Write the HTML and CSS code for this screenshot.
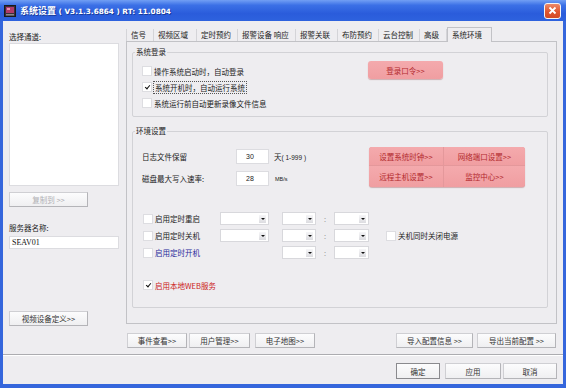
FILE: index.html
```html
<!DOCTYPE html>
<html lang="zh-CN">
<head>
    <meta charset="UTF-8">
    <title>系统设置</title>
    <link rel="stylesheet" href="styles.css">
</head>
<body>
<div class="window">
    <div class="titlebar">
        <svg class="app-icon" width="12" height="12" viewBox="0 0 12 12">
            <rect x="0.5" y="0.5" width="11" height="11" fill="#3a2c3c" stroke="#1a1a1a"/>
            <rect x="2" y="2" width="8" height="6" fill="#b03a6a"/>
            <rect x="3" y="3" width="3" height="2" fill="#e890b0"/>
            <rect x="2" y="9" width="8" height="1.5" fill="#8a8a8a"/>
        </svg>
        <span class="title"><span class="title-cn">系统设置</span> ( V3.1.3.6864 ) RT: 11.0804</span>
        <span class="close">
            <svg width="9" height="9" viewBox="0 0 9 9"><path d="M1.5 1.5 L7.5 7.5 M7.5 1.5 L1.5 7.5" stroke="#fff" stroke-width="1.8"/></svg>
        </span>
    </div>

    <div class="client">
        <div class="main">
            <div class="left">
                <div class="label first">选择通道:</div>
                <div class="listbox"></div>
                <button class="btn copy" disabled>复制到 &gt;&gt;</button>
                <div class="label server">服务器名称:</div>
                <div class="textbox">SEAV01</div>
                <button class="btn video">视频设备定义&gt;&gt;</button>
            </div>

            <div class="right">
                <div class="tabs">
                    <span class="tab t28 first-tab">信号</span>
                    <span class="tab t43">视频区域</span>
                    <span class="tab t41">定时预约</span>
                    <span class="tab t58">报警设备 响应</span>
                    <span class="tab t42">报警关联</span>
                    <span class="tab t41">布防预约</span>
                    <span class="tab t41">云台控制</span>
                    <span class="tab t27">高级</span>
                    <span class="tab t45 active">系统环境</span>
                </div>

                <div class="panel">
                    <div class="group login-group">
                        <span class="legend">系统登录</span>
                        <div class="login-body">
                            <div class="check-list">
                                <label class="check"><span class="box"></span><span>操作系统启动时，自动登录</span></label>
                                <label class="check"><span class="box on"></span><span class="focus">系统开机时，自动运行系统</span></label>
                                <label class="check"><span class="box"></span><span>系统运行前自动更新录像文件信息</span></label>
                            </div>
                            <button class="btn pink login-btn">登录口令&gt;&gt;</button>
                        </div>
                    </div>

                    <div class="group env-group">
                        <span class="legend">环境设置</span>
                        <div class="env-top">
                            <div class="form">
                                <div class="form-row">
                                    <span class="form-label">日志文件保留</span>
                                    <span class="num">30</span>
                                    <span class="unit">天<span class="latin">( 1-999 )</span></span>
                                </div>
                                <div class="form-row">
                                    <span class="form-label">磁盘最大写入速率:</span>
                                    <span class="num">28</span>
                                    <span class="unit small">MB/s</span>
                                </div>
                            </div>
                            <div class="pink-grid">
                                <button class="pink-cell">设置系统时钟&gt;&gt;</button>
                                <button class="pink-cell">网络端口设置&gt;&gt;</button>
                                <button class="pink-cell">远程主机设置&gt;&gt;</button>
                                <button class="pink-cell">监控中心&gt;&gt;</button>
                            </div>
                        </div>

                        <div class="schedule">
                            <div class="sched-row">
                                <label class="check sched-check"><span class="box"></span><span>启用定时重启</span></label>
                                <span class="select s49"><i></i></span>
                                <span class="select s34"><i></i></span>
                                <span class="colon">:</span>
                                <span class="select s35"><i></i></span>
                            </div>
                            <div class="sched-row">
                                <label class="check sched-check"><span class="box"></span><span>启用定时关机</span></label>
                                <span class="select s49"><i></i></span>
                                <span class="select s34"><i></i></span>
                                <span class="colon">:</span>
                                <span class="select s35"><i></i></span>
                                <label class="check power"><span class="box"></span><span>关机同时关闭电源</span></label>
                            </div>
                            <div class="sched-row">
                                <label class="check sched-check blue"><span class="box"></span><span>启用定时开机</span></label>
                                <span class="select-gap"></span>
                                <span class="select s34"><i></i></span>
                                <span class="colon">:</span>
                                <span class="select s35"><i></i></span>
                            </div>
                        </div>

                        <label class="check web red"><span class="box on"></span><span>启用本地WEB服务</span></label>
                    </div>
                </div>

                <div class="tool-row">
                    <button class="btn b60 m1">事件查看&gt;&gt;</button>
                    <button class="btn b61 m2">用户管理&gt;&gt;</button>
                    <button class="btn b60 m5">电子地图&gt;&gt;</button>
                    <button class="btn b77 push">导入配置信息 &gt;&gt;</button>
                    <button class="btn b79 m4">导出当前配置 &gt;&gt;</button>
                </div>
            </div>
        </div>

        <div class="sep"></div>

        <div class="ok-row">
            <button class="btn default ok">确定</button>
            <button class="btn apply">应用</button>
            <button class="btn cancel">取消</button>
        </div>
    </div>
</div>
</body>
</html>
```

FILE: styles.css
```css
* {
    margin: 0;
    padding: 0;
    box-sizing: border-box;
}
body {
    background: #fff;
    font-family: "Noto Sans CJK SC", sans-serif;
    font-size: 7.5px;
    color: #222;
}
button {
    font-family: inherit;
    font-size: inherit;
    color: inherit;
}

/* window frame */
.window {
    width: 566px;
    height: 388px;
    background: #3566dc;
    display: flex;
    flex-direction: column;
}
.titlebar {
    height: 21px;
    display: flex;
    align-items: center;
    padding: 0 5px 0 4px;
    background: linear-gradient(#729ff4, #3b70e6 25%, #2a5cdb 65%, #2e62de);
}
.app-icon {
    flex: none;
}
.title {
    margin-left: 4px;
    color: #fff;
    font-family: "DejaVu Sans", sans-serif;
    font-weight: bold;
    font-size: 7.3px;
    text-shadow: 1px 1px 0 #1a3c9a;
}
.title-cn {
    font-family: "Noto Sans CJK SC", sans-serif;
    font-size: 9px;
}
.close {
    margin-left: auto;
    width: 17px;
    height: 16px;
    border: 1px solid #f4f4f4;
    border-radius: 3px;
    background: linear-gradient(#ec8a6a, #e0552e 55%, #d24a24);
    display: flex;
    align-items: center;
    justify-content: center;
}

.client {
    flex: 1;
    margin: 0 3px 4px;
    background: #eeedf0;
    display: flex;
    flex-direction: column;
}
.main {
    display: flex;
    height: 331px;
}

/* left column */
.left {
    width: 123px;
    padding-left: 6px;
    display: flex;
    flex-direction: column;
    align-items: flex-start;
}
.label {
    line-height: 12px;
}
.label.first {
    margin-top: 10px;
}
.listbox {
    width: 110px;
    height: 143px;
    background: #fff;
    border: 1px solid #dcdce0;
}
.btn {
    height: 15px;
    background: linear-gradient(#fcfcfd, #efeff1);
    border: 1px solid #cfcfd3;
    border-right-color: #b4b4b8;
    border-bottom-color: #b4b4b8;
    display: flex;
    align-items: center;
    justify-content: center;
    color: #333;
    flex: none;
}
.btn.copy {
    margin-top: 6px;
    width: 79px;
    color: #b0b0b4;
}
.label.server {
    margin-top: 15px;
}
.textbox {
    margin-top: 2px;
    width: 110px;
    height: 13px;
    background: #fff;
    border: 1px solid #dcdce0;
    font-family: "Liberation Serif", serif;
    font-size: 8px;
    line-height: 11px;
    padding-left: 2px;
    color: #111;
}
.btn.video {
    margin-top: 62px;
    width: 79px;
}

/* right column */
.right {
    width: 431px;
    display: flex;
    flex-direction: column;
}
.tabs {
    height: 20px;
    display: flex;
    align-items: flex-end;
}
.tab {
    height: 12px;
    line-height: 11px;
    padding-left: 4px;
    border-right: 1px solid #d4d4d8;
    white-space: nowrap;
}
.first-tab {
    border-left: 1px solid #d4d4d8;
}
.t27 { width: 27px; }
.t28 { width: 28px; }
.t41 { width: 41px; }
.t42 { width: 42px; }
.t43 { width: 43px; }
.t45 { width: 45px; }
.t58 { width: 58px; }
.tab.active {
    height: 15px;
    margin-bottom: -1px;
    line-height: 13px;
    border: 1px solid #c2c2c6;
    border-bottom: none;
    background: #eeedf0;
    position: relative;
    z-index: 1;
}
.panel {
    height: 283px;
    border: 1px solid #c2c2c6;
    padding: 10px 8px 0 5px;
}

/* group boxes */
.group {
    border: 1px solid #d2d2d6;
    border-radius: 2px;
}
.legend {
    display: block;
    width: fit-content;
    margin: -7px 0 0 2px;
    padding: 0 1px;
    line-height: 12px;
    background: #eeedf0;
}
.login-body {
    display: flex;
    align-items: flex-start;
    padding: 3px 0 5px 9px;
}
.check-list {
    width: 226px;
    margin-top: 2px;
}
.check {
    display: flex;
    align-items: center;
    height: 16px;
    gap: 2px;
    white-space: nowrap;
}
.box {
    width: 10px;
    height: 10px;
    flex: none;
    background: #fff;
    border: 1px solid #dddde1;
    display: flex;
    align-items: center;
    justify-content: center;
}
.box.on::after {
    content: "";
    width: 2px;
    height: 4px;
    margin-top: -1px;
    border: solid #111;
    border-width: 0 1.5px 1.5px 0;
    transform: rotate(40deg);
}
.focus {
    outline: 1px dotted #555;
    outline-offset: 0;
    padding: 0 1px;
}
.btn.pink,
.pink-cell {
    background: linear-gradient(#f4aaad, #f09ea1);
    color: #b22a2e;
    border: none;
}
.login-btn {
    width: 75px;
    height: 18px;
    border-radius: 3px;
    box-shadow: 0 1px 1px rgba(150, 60, 60, 0.35);
}

.env-group {
    margin-top: 14px;
    padding-bottom: 14px;
}
.env-top {
    display: flex;
    align-items: flex-start;
    padding: 10px 0 0 9px;
}
.form {
    width: 227px;
    margin-top: 2px;
    display: flex;
    flex-direction: column;
    gap: 7px;
}
.form-row {
    display: flex;
    align-items: center;
    height: 15px;
}
.form-label {
    width: 94px;
}
.num {
    width: 33px;
    height: 15px;
    background: #fff;
    border: 1px solid #dcdce0;
    font-family: "Liberation Sans", sans-serif;
    font-size: 7px;
    line-height: 13px;
    padding-left: 9px;
}
.unit {
    margin-left: 5px;
}
.latin {
    font-family: "Liberation Sans", sans-serif;
    font-size: 6.5px;
}
.unit.small {
    font-family: "Liberation Sans", sans-serif;
    font-size: 5.5px;
    margin-left: 6px;
}
.pink-grid {
    display: grid;
    grid-template-columns: 74px 81px;
    grid-template-rows: 18px 21px;
    gap: 1px;
    background: #e4989b;
    border-radius: 3px;
    overflow: hidden;
    box-shadow: 0 1px 1px rgba(150, 60, 60, 0.35);
}
.pink-cell {
    display: flex;
    align-items: center;
    justify-content: center;
}

.schedule {
    margin-top: 23px;
    padding-left: 10px;
}
.sched-row {
    display: flex;
    align-items: center;
    height: 17px;
}
.sched-check {
    width: 77px;
}
.select {
    height: 13px;
    background: #fff;
    border: 1px solid #d8d8dc;
    display: flex;
    align-items: center;
    justify-content: flex-end;
    padding-right: 2px;
}
.select i {
    width: 7px;
    height: 8px;
    background: linear-gradient(#f6f6f8, #dcdce0);
    display: flex;
    align-items: center;
    justify-content: center;
}
.select i::after {
    content: "";
    border-left: 2px solid transparent;
    border-right: 2px solid transparent;
    border-top: 2.5px solid #111;
}
.s49 { width: 49px; margin-right: 13px; }
.s34 { width: 34px; }
.s35 { width: 35px; }
.select-gap {
    width: 62px;
}
.colon {
    width: 18px;
    text-align: center;
    color: #999;
}
.power {
    margin-left: 17px;
}
.blue {
    color: #2a2a9a;
}
.red {
    color: #cc2020;
}
.web {
    margin: 16px 0 0 10px;
}

/* buttons under the panel */
.tool-row {
    display: flex;
    margin-top: 9px;
    padding-right: 1px;
}
.b60 { width: 60px; }
.b61 { width: 61px; }
.b77 { width: 77px; }
.b79 { width: 79px; }
.m1 { margin-left: 1px; }
.m2 { margin-left: 2px; }
.m4 { margin-left: 4px; }
.m5 { margin-left: 5px; }
.push { margin-left: auto; }

.sep {
    margin-top: 2px;
    height: 2px;
    border-top: 1px solid #acacb0;
    border-bottom: 1px solid #fff;
}
.ok-row {
    display: flex;
    justify-content: flex-end;
    margin-top: 7px;
    padding-right: 6px;
}
.ok-row .btn {
    height: 16px;
}
.btn.default {
    border-color: #8a8a8e;
}
.ok { width: 44px; }
.apply { width: 56px; margin-left: 5px; }
.cancel { width: 54px; margin-left: 2px; }
```
